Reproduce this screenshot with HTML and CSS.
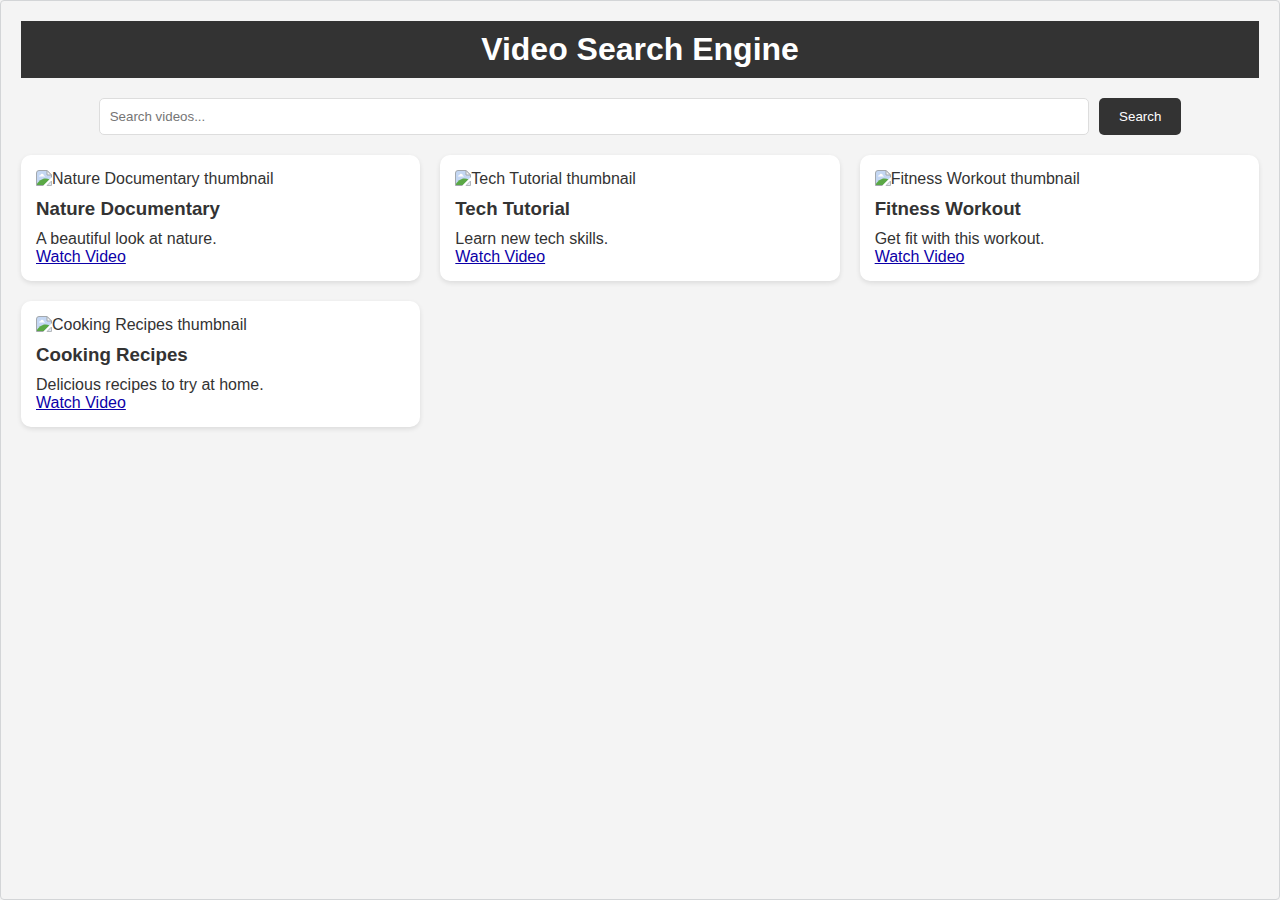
FILE: index.html
```html
<!DOCTYPE html>
<html lang="en">
<head>
<meta charset="utf-8">
<meta name="viewport" content="width=device-width, initial-scale=1">
<title>Video Search Engine</title>
<link rel="stylesheet" href="styles.css">
</head>
<body>
<svg class="sprite" aria-hidden="true">
  <symbol id="missing" viewBox="0 0 16 16">
    <path d="M3 .5H11L15.5 5V8L8 15.5H.5V3Q.5.5 3 .5Z" fill="#c4d7f3"/>
    <path d="M3 6.500Q3 5.200 4.400 5.200Q4.800 3.600 6.300 3.800Q7.700 4 7.800 5.400Q9 5.600 9 6.500Z" fill="#fff"/>
    <path d="M1 15V13.500Q4 9.500 8 8.500Q11 8 13.500 9.500L8 15Z" fill="#5aa845"/>
    <path d="M8.500 15.500H.5V3Q.5.5 3 .5H11L15.500 5V8" fill="none" stroke="#a3a8ad"/>
    <path d="M11 .5V5H15.500Z" fill="#f3f4f5" stroke="#a3a8ad"/>
    <path d="M7 16L16 7V10.500L10.500 16Z" fill="#fff"/>
    <path d="M11 15.500L15.500 11V15.500Z" fill="#dfe8f3" stroke="#b4b8bc"/>
  </symbol>
</svg>
<div class="page">
  <header class="header"><h1 class="title">Video Search Engine</h1></header>
  <form class="search">
    <input class="search-input" type="text" placeholder="Search videos..." aria-label="Search videos">
    <button class="search-button" type="button">Search</button>
  </form>
  <main class="grid">
    <article class="card">
      <div class="thumb"><svg class="thumb-icon" aria-hidden="true"><use href="#missing"/></svg><span>Nature Documentary thumbnail</span></div>
      <h3 class="card-title">Nature Documentary</h3>
      <p class="card-text">A beautiful look at nature.</p>
      <a class="card-link" href="#">Watch Video</a>
    </article>
    <article class="card">
      <div class="thumb"><svg class="thumb-icon" aria-hidden="true"><use href="#missing"/></svg><span>Tech Tutorial thumbnail</span></div>
      <h3 class="card-title">Tech Tutorial</h3>
      <p class="card-text">Learn new tech skills.</p>
      <a class="card-link" href="#">Watch Video</a>
    </article>
    <article class="card">
      <div class="thumb"><svg class="thumb-icon" aria-hidden="true"><use href="#missing"/></svg><span>Fitness Workout thumbnail</span></div>
      <h3 class="card-title">Fitness Workout</h3>
      <p class="card-text">Get fit with this workout.</p>
      <a class="card-link" href="#">Watch Video</a>
    </article>
    <article class="card">
      <div class="thumb"><svg class="thumb-icon" aria-hidden="true"><use href="#missing"/></svg><span>Cooking Recipes thumbnail</span></div>
      <h3 class="card-title">Cooking Recipes</h3>
      <p class="card-text">Delicious recipes to try at home.</p>
      <a class="card-link" href="#">Watch Video</a>
    </article>
  </main>
</div>
</body>
</html>
```
FILE: styles.css
```css
* {
  box-sizing: border-box;
  margin: 0;
  padding: 0;
}

body {
  background: #f4f4f4;
  color: #333;
  font-family: "Liberation Sans", Arial, sans-serif;
  font-size: 16px;
  line-height: 18px;
}

.sprite {
  position: absolute;
  width: 0;
  height: 0;
}

.page {
  min-height: 100vh;
  padding: 20px;
  border: 1px solid #d3d5d7;
  border-radius: 4px;
}

.header {
  padding: 10px;
  background: #333;
  color: #fff;
  text-align: center;
}

.title {
  font-size: 32px;
  line-height: 37px;
}

.search {
  display: flex;
  justify-content: center;
  gap: 10px;
  margin: 20px 0;
}

.search-input,
.search-button {
  border-radius: 5px;
  font-family: "Liberation Sans", Arial, sans-serif;
  line-height: 15px;
}

.search-input {
  width: 80%;
  padding: 10px;
  border: 1px solid #ddd;
  background: #fff;
}

.search-button {
  padding: 10px 20px;
  border: 0;
  background: #333;
  color: #fff;
  cursor: pointer;
}

.grid {
  display: grid;
  grid-template-columns: repeat(auto-fill, minmax(300px, 1fr));
  gap: 20px;
}

.card {
  padding: 15px;
  border-radius: 10px;
  background: #fff;
  box-shadow: 0 2px 5px rgba(0, 0, 0, 0.1);
}

.thumb {
  display: flex;
  align-items: flex-start;
}

.thumb-icon {
  flex: none;
  width: 16px;
  height: 16px;
}

.card-title {
  margin: 10px 0;
  font-size: 1.17em;
  line-height: 22px;
}

.card-link {
  display: inline-block;
  color: #0c00a8;
}
```
